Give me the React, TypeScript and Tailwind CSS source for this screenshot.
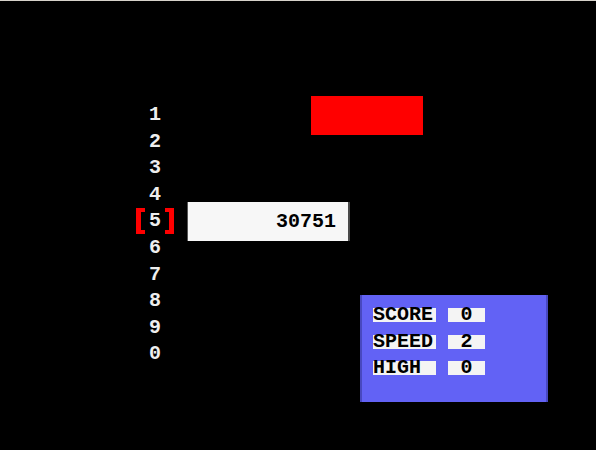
const rows = ['1', '2', '3', '4', '5', '6', '7', '8', '9', '0'];

const stats = [
  { label: 'SCORE', value: '0' },
  { label: 'SPEED', value: '2' },
  { label: 'HIGH', value: '0' },
];

function Bracket({ side }: { side: 'left' | 'right' }) {
  return (
    <div
      className={
        side === 'left'
          ? 'w-[9px] h-[26px] border-l-[5px] border-y-[4px] border-[#ff0000]'
          : 'w-[9px] h-[26px] border-r-[5px] border-y-[4px] border-[#ff0000]'
      }
    />
  );
}

export default function App() {
  return (
    <div
      className="relative w-[596px] h-[450px] bg-black border-t border-[#d6d2ca] overflow-hidden font-bold"
      style={{ fontFamily: '"Liberation Mono", "DejaVu Sans Mono", monospace' }}
    >
      <div className="flex pl-[136px] pt-[101px]">
        <div className="flex flex-col w-[38px]">
          {rows.map((n) => (
            <div key={n} className="h-[26.56px] flex items-center justify-center text-[20px] leading-none text-[#eeeeee]">
              {n === '5' ? (
                <div className="flex items-center">
                  <Bracket side="left" />
                  <span className="w-[20px] text-center">{n}</span>
                  <Bracket side="right" />
                </div>
              ) : (
                n
              )}
            </div>
          ))}
        </div>

        {/* playfield */}
        <div className="relative flex-1 h-[266px]">
          <div className="absolute left-[137px] top-[-6px] w-[112px] h-[39px] bg-[#ff0000]" />
          <div className="absolute left-[13px] top-[100px] w-[163px] h-[39px] bg-[#f7f7f7] border-l border-r-2 border-l-[#555] border-r-[#4a4a4a] flex items-center justify-end pr-[12px] text-[20px] leading-none text-black">
            30751
          </div>
        </div>
      </div>

      <div className="absolute left-[360px] top-[294px] w-[188px] h-[107px] bg-[#6262f5] border-x-2 border-[#4848c0] pl-[11px] pt-[13px] flex flex-col gap-[12.5px]">
        {stats.map((s) => (
          <div key={s.label} className="flex items-center gap-[12px] h-[14px] text-[20px] leading-none text-black">
            <div className="w-[63px] h-[14px] bg-[#f4f4f4] flex items-center overflow-visible">{s.label}</div>
            <div className="w-[37px] h-[14px] bg-[#f4f4f4] flex items-center justify-center">{s.value}</div>
          </div>
        ))}
      </div>
    </div>
  );
}
